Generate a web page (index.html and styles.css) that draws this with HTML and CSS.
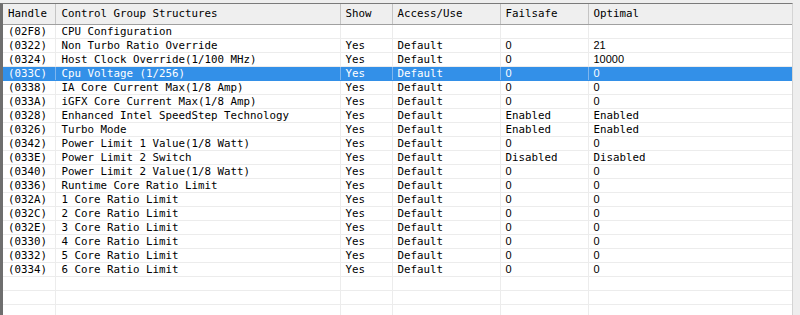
FILE: index.html
```html
<!DOCTYPE html>
<html lang="en">
<head>
    <meta charset="UTF-8">
    <title>Control Group Structures</title>
    <link rel="stylesheet" href="styles.css">
</head>
<body>
    <div class="window">
        <div class="list-view">
            <table class="grid">
                <colgroup>
                    <col class="c-handle">
                    <col class="c-name">
                    <col class="c-show">
                    <col class="c-access">
                    <col class="c-failsafe">
                    <col class="c-optimal">
                </colgroup>
                <thead>
                    <tr>
                        <th>Handle</th>
                        <th class="name">Control Group Structures</th>
                        <th>Show</th>
                        <th>Access/Use</th>
                        <th>Failsafe</th>
                        <th>Optimal</th>
                    </tr>
                </thead>
                <tbody>
                    <tr><td>(02F8)</td><td class="name">CPU Configuration</td><td></td><td></td><td></td><td></td></tr>
                    <tr><td>(0322)</td><td class="name">Non Turbo Ratio Override</td><td>Yes</td><td>Default</td><td class="num">0</td><td class="num">21</td></tr>
                    <tr><td>(0324)</td><td class="name">Host Clock Override(1/100 MHz)</td><td>Yes</td><td>Default</td><td class="num">0</td><td class="num">10000</td></tr>
                    <tr class="selected"><td>(033C)</td><td class="name">Cpu Voltage (1/256)</td><td>Yes</td><td>Default</td><td class="num">0</td><td class="num">0</td></tr>
                    <tr><td>(0338)</td><td class="name">IA Core Current Max(1/8 Amp)</td><td>Yes</td><td>Default</td><td class="num">0</td><td class="num">0</td></tr>
                    <tr><td>(033A)</td><td class="name">iGFX Core Current Max(1/8 Amp)</td><td>Yes</td><td>Default</td><td class="num">0</td><td class="num">0</td></tr>
                    <tr><td>(0328)</td><td class="name">Enhanced Intel SpeedStep Technology</td><td>Yes</td><td>Default</td><td>Enabled</td><td>Enabled</td></tr>
                    <tr><td>(0326)</td><td class="name">Turbo Mode</td><td>Yes</td><td>Default</td><td>Enabled</td><td>Enabled</td></tr>
                    <tr><td>(0342)</td><td class="name">Power Limit 1 Value(1/8 Watt)</td><td>Yes</td><td>Default</td><td class="num">0</td><td class="num">0</td></tr>
                    <tr><td>(033E)</td><td class="name">Power Limit 2 Switch</td><td>Yes</td><td>Default</td><td>Disabled</td><td>Disabled</td></tr>
                    <tr><td>(0340)</td><td class="name">Power Limit 2 Value(1/8 Watt)</td><td>Yes</td><td>Default</td><td class="num">0</td><td class="num">0</td></tr>
                    <tr><td>(0336)</td><td class="name">Runtime Core Ratio Limit</td><td>Yes</td><td>Default</td><td class="num">0</td><td class="num">0</td></tr>
                    <tr><td>(032A)</td><td class="name">1 Core Ratio Limit</td><td>Yes</td><td>Default</td><td class="num">0</td><td class="num">0</td></tr>
                    <tr><td>(032C)</td><td class="name">2 Core Ratio Limit</td><td>Yes</td><td>Default</td><td class="num">0</td><td class="num">0</td></tr>
                    <tr><td>(032E)</td><td class="name">3 Core Ratio Limit</td><td>Yes</td><td>Default</td><td class="num">0</td><td class="num">0</td></tr>
                    <tr><td>(0330)</td><td class="name">4 Core Ratio Limit</td><td>Yes</td><td>Default</td><td class="num">0</td><td class="num">0</td></tr>
                    <tr><td>(0332)</td><td class="name">5 Core Ratio Limit</td><td>Yes</td><td>Default</td><td class="num">0</td><td class="num">0</td></tr>
                    <tr><td>(0334)</td><td class="name">6 Core Ratio Limit</td><td>Yes</td><td>Default</td><td class="num">0</td><td class="num">0</td></tr>
                    <tr class="empty"><td></td><td></td><td></td><td></td><td></td><td></td></tr>
                    <tr class="empty"><td></td><td></td><td></td><td></td><td></td><td></td></tr>
                    <tr class="empty"><td></td><td></td><td></td><td></td><td></td><td></td></tr>
                </tbody>
            </table>
        </div>
    </div>
</body>
</html>
```

FILE: styles.css
```css
:root {
    --frame: #eeeeee;
    --edge-dark: #6e6e6e;
    --header-bg: #efefef;
    --header-line: #a0a0a0;
    --grid-line: #ececec;
    --selected: #3390e8;
    --text: #000000;
}

* {
    margin: 0;
    padding: 0;
    box-sizing: border-box;
}

body {
    background-color: var(--frame);
    width: 800px;
    height: 315px;
    overflow: hidden;
    font-family: "DejaVu Sans Mono", "Liberation Mono", monospace;
    font-size: 10.8px;
    color: var(--text);
}

.window {
    padding-top: 3px;
    height: 315px;
}

.list-view {
    width: 793px;
    height: 312px;
    background: white;
    border-top: 1px solid #7a7a7a;
    border-left: 3px solid var(--edge-dark);
    border-right: 1px solid #d4d4d4;
    overflow: hidden;
}

.grid {
    width: 789px;
    border-collapse: collapse;
    table-layout: fixed;
}

.c-handle { width: 52px; }
.c-name { width: 285px; }
.c-show { width: 52px; }
.c-access { width: 108px; }
.c-failsafe { width: 88px; }
.c-optimal { width: 204px; }

.grid th {
    height: 20px;
    background: var(--header-bg);
    border-bottom: 1px solid var(--header-line);
    border-right: 1px solid #c4c4c4;
    font-weight: normal;
    text-align: left;
    padding: 0 0 1px 5px;
    white-space: nowrap;
}

.grid th.name,
.grid td.name {
    padding-left: 6px;
}

.grid td {
    height: 14px;
    line-height: 13px;
    padding: 0 0 0 5px;
    border-bottom: 1px solid var(--grid-line);
    border-right: 1px solid var(--grid-line);
    white-space: nowrap;
    overflow: hidden;
}

.grid tbody tr:first-child td {
    border-top: 1px solid white;
}

.grid td.num {
    font-family: "Liberation Sans", Arial, sans-serif;
    font-size: 11px;
}

.grid tr.selected td {
    background: var(--selected);
    color: white;
    border-right-color: #7fb6ee;
    border-bottom-color: var(--selected);
}
```
